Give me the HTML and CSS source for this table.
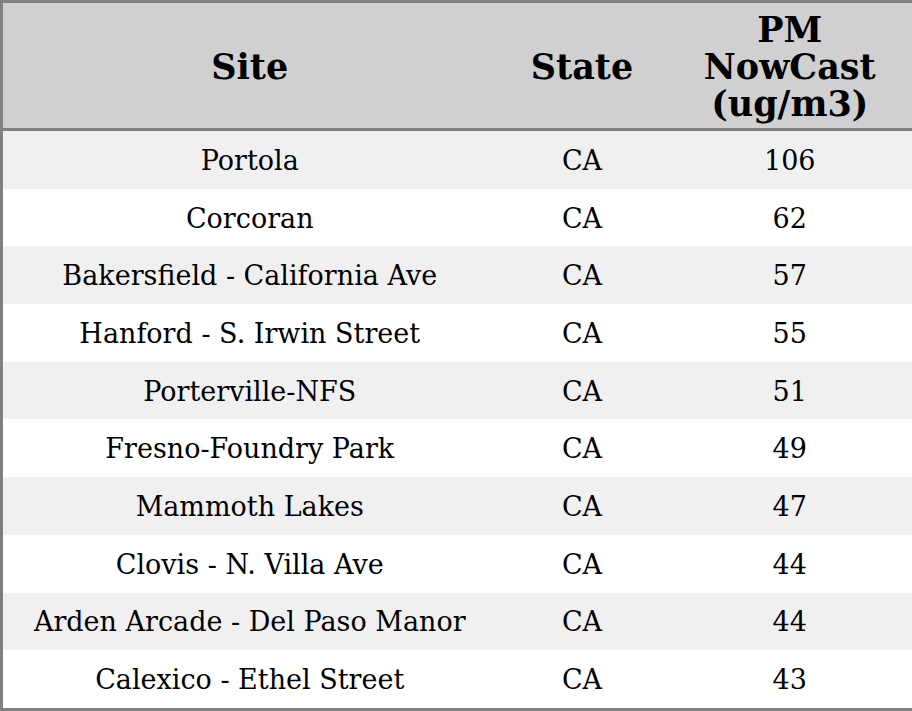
FILE: index.html
```html
<!DOCTYPE html>
<html>
<head>
<meta charset="utf-8">
<link rel="stylesheet" href="styles.css">
</head>
<body>
<table class="data">
  <colgroup>
    <col class="c-site">
    <col class="c-state">
    <col class="c-pm">
  </colgroup>
  <thead>
    <tr>
      <th>Site</th>
      <th>State</th>
      <th>PM<br>NowCast<br>(ug/m3)</th>
    </tr>
  </thead>
  <tbody>
    <tr><td>Portola</td><td>CA</td><td>106</td></tr>
    <tr><td>Corcoran</td><td>CA</td><td>62</td></tr>
    <tr><td>Bakersfield - California Ave</td><td>CA</td><td>57</td></tr>
    <tr><td>Hanford - S. Irwin Street</td><td>CA</td><td>55</td></tr>
    <tr><td>Porterville-NFS</td><td>CA</td><td>51</td></tr>
    <tr><td>Fresno-Foundry Park</td><td>CA</td><td>49</td></tr>
    <tr><td>Mammoth Lakes</td><td>CA</td><td>47</td></tr>
    <tr><td>Clovis - N. Villa Ave</td><td>CA</td><td>44</td></tr>
    <tr><td>Arden Arcade - Del Paso Manor</td><td>CA</td><td>44</td></tr>
    <tr><td>Calexico - Ethel Street</td><td>CA</td><td>43</td></tr>
  </tbody>
</table>
</body>
</html>
```
FILE: styles.css
```css
html, body {
  margin: 0;
  padding: 0;
  background: #ffffff;
}
.data {
  width: 912px;
  height: 711px;
  border-collapse: collapse;
  table-layout: fixed;
  border: 3px solid #808080;
  font-family: "DejaVu Serif", serif;
  color: #000;
}
.c-site { width: 495px; }
.c-state { width: 171px; }
.c-pm { width: 246px; }
.data th {
  background: #d0d0d0;
  font-size: 35px;
  font-weight: bold;
  line-height: 37px;
  text-align: center;
  vertical-align: middle;
  padding: 7px 0 5px;
  height: 113px;
  border-bottom: 3px solid #808080;
}
.data td {
  font-size: 27px;
  line-height: 30px;
  text-align: center;
  vertical-align: middle;
  padding: 2px 0 0;
  height: 55.7px;
}
.data tbody tr:nth-child(odd) td { background: #f0f0f0; }
.data tbody tr:nth-child(even) td { background: #ffffff; }
```
